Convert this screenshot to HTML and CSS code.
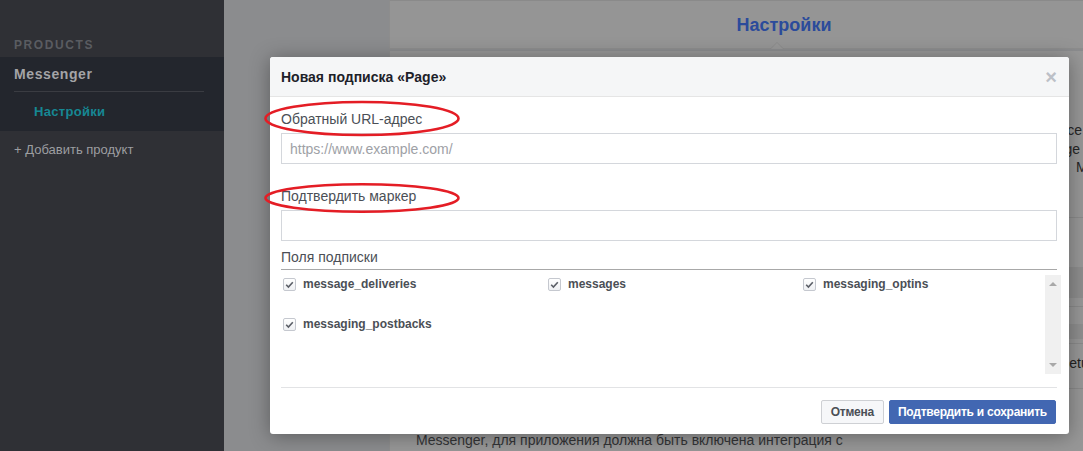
FILE: index.html
```html
<!DOCTYPE html>
<html lang="ru">
<head>
<meta charset="utf-8">
<title>Новая подписка</title>
<link rel="stylesheet" href="styles.css">
</head>
<body>
<div class="page">
  <aside class="sidebar">
    <div class="side-title">PRODUCTS</div>
    <div class="side-group">
      <div class="side-product">Messenger</div>
      <div class="side-sub">Настройки</div>
    </div>
    <div class="side-add">+ Добавить продукт</div>
  </aside>
  <div class="gutter"></div>
  <main class="main">
    <div class="tab-head">
      <h1 class="tab-title">Настройки</h1>
      <span class="notch"></span>
    </div>
    <div class="content">
      <div class="intro">
        <span class="intro-line l1">Укажите URL-адрес обратного вызова, который будет получать уведомления от сервисе</span>
        <span class="intro-line l2">Подпишитесь на события страницы, чтобы получать обновления страницы и page</span>
        <span class="intro-line l3">Messenger</span>
      </div>
      <div class="b1"></div>
      <div class="band"></div>
      <div class="b2"></div>
      <div class="b2b"></div>
      <div class="band2"></div>
      <div class="b2c"></div>
      <div class="b3"><span class="setup">Setup Webhooks</span></div>
      <div class="b4"></div>
      <p class="bottom-text">Messenger, для приложения должна быть включена интеграция с</p>
    </div>
  </main>
</div>

<div class="modal">
  <div class="modal-head">
    <span class="modal-title">Новая подписка «Page»</span>
    <span class="modal-close">×</span>
  </div>
  <div class="modal-body">
    <label class="field-label first">Обратный URL-адрес</label>
    <div class="input"><span class="placeholder">https://www.example.com/</span></div>
    <label class="field-label">Подтвердить маркер</label>
    <div class="input"></div>
    <div class="fields-label">Поля подписки</div>
    <div class="fields-box">
      <div class="fields-grid">
        <div class="check"><span class="box"><svg width="13" height="13" viewBox="0 0 13 13"><path d="M3.2 6.8 L5.4 9 L9.8 4.2" fill="none" stroke="#5b5f67" stroke-width="1.6"/></svg></span>message_deliveries</div>
        <div class="check"><span class="box"><svg width="13" height="13" viewBox="0 0 13 13"><path d="M3.2 6.8 L5.4 9 L9.8 4.2" fill="none" stroke="#5b5f67" stroke-width="1.6"/></svg></span>messages</div>
        <div class="check"><span class="box"><svg width="13" height="13" viewBox="0 0 13 13"><path d="M3.2 6.8 L5.4 9 L9.8 4.2" fill="none" stroke="#5b5f67" stroke-width="1.6"/></svg></span>messaging_optins</div>
        <div class="check"><span class="box"><svg width="13" height="13" viewBox="0 0 13 13"><path d="M3.2 6.8 L5.4 9 L9.8 4.2" fill="none" stroke="#5b5f67" stroke-width="1.6"/></svg></span>messaging_postbacks</div>
      </div>
      <div class="scrollbar">
        <span class="arrow up"></span>
        <span class="arrow down"></span>
      </div>
    </div>
    <div class="modal-foot">
      <button class="btn cancel">Отмена</button>
      <button class="btn primary">Подтвердить и сохранить</button>
    </div>
  </div>
</div>

<svg class="mark mark1" width="200" height="38" viewBox="0 0 200 38"><ellipse cx="99" cy="18.5" rx="96.5" ry="16.5" fill="none" stroke="#e41d25" stroke-width="2.6"/></svg>
<svg class="mark mark2" width="200" height="32" viewBox="0 0 200 32"><ellipse cx="99" cy="16" rx="96.5" ry="13.7" fill="none" stroke="#e41d25" stroke-width="2.6"/></svg>
</body>
</html>
```
FILE: styles.css
```css
html, body {
  margin: 0;
  padding: 0;
}
body {
  width: 1083px;
  height: 451px;
  overflow: hidden;
  position: relative;
  background: #8b8c8e;
  font-family: "Liberation Sans", Arial, Helvetica, sans-serif;
}
.page {
  display: flex;
  height: 451px;
}

/* Sidebar */
.sidebar {
  width: 224px;
  flex: none;
  background: #2f3035;
  padding-top: 38px;
  box-sizing: border-box;
}
.side-title {
  padding-left: 14px;
  font-size: 12px;
  line-height: 14px;
  font-weight: bold;
  letter-spacing: 1.6px;
  color: #5a5c61;
}
.side-group {
  margin-top: 5px;
  height: 74px;
  background: #23262d;
}
.side-product {
  margin: 0 20px 0 14px;
  height: 34px;
  line-height: 34px;
  font-size: 14px;
  font-weight: bold;
  letter-spacing: 0.6px;
  color: #a3a4a7;
  border-bottom: 1px solid #3a3c42;
}
.side-sub {
  padding-left: 34px;
  line-height: 39px;
  font-size: 13px;
  font-weight: bold;
  letter-spacing: 0.3px;
  color: #168894;
}
.side-add {
  padding: 1px 0 0 14px;
  line-height: 36px;
  font-size: 13px;
  color: #9d9ea1;
}

.gutter {
  width: 165px;
  flex: none;
}

/* Main */
.main {
  width: 790px;
  flex: none;
}
.tab-head {
  position: relative;
  height: 47px;
  background: #959595;
  border: 1px solid #8d8d8d;
  border-top-color: #8a8a8a;
  text-align: center;
}
.tab-title {
  margin: 0;
  font-size: 18px;
  line-height: 48px;
  font-weight: bold;
  color: #2b4b9b;
}
.notch {
  position: absolute;
  left: 380px;
  bottom: -1px;
  width: 0;
  height: 0;
  border-left: 7px solid transparent;
  border-right: 7px solid transparent;
  border-bottom: 7px solid #8a8a8a;
}
.notch::after {
  content: "";
  position: absolute;
  left: -6px;
  top: 1px;
  border-left: 6px solid transparent;
  border-right: 6px solid transparent;
  border-bottom: 6px solid #979797;
}
.content {
  margin-top: 2px;
  background: #979797;
  border-left: 1px solid #8d8d8d;
  height: 420px;
}
.intro {
  padding-top: 70px;
  height: 96px;
  border-bottom: 1px solid #8a8a8a;
}
.intro-line {
  display: block;
  white-space: nowrap;
  font-size: 14px;
  line-height: 18.5px;
  color: #262626;
  text-align: right;
  overflow: hidden;
}
.intro-line.l1 { width: 692px; }
.intro-line.l2 { width: 690px; }
.intro-line.l3 { text-align: left; padding-left: 686px; }
.b1 { height: 49px; }
.band { height: 31px; background: #8d8d8d; }
.b2 { height: 8px; border-bottom: 1px solid #8a8a8a; }
.b2b { height: 17px; }
.band2 { height: 15px; background: #8e8e8e; }
.b2c { height: 4px; border-bottom: 1px solid #8a8a8a; }
.b3 {
  height: 44px;
  font-size: 14px;
  line-height: 38px;
  color: #222;
  padding-left: 670px;
  white-space: nowrap;
  border-bottom: 1px solid #8a8a8a;
}
.b4 { height: 42px; }
.bottom-text {
  margin: 0;
  padding-left: 26px;
  font-size: 14px;
  line-height: 18px;
  color: #333436;
}

/* Modal */
.modal {
  position: absolute;
  left: 270px;
  top: 57px;
  width: 799px;
  height: 377px;
  background: #fff;
  border-radius: 3px;
  box-shadow: 0 2px 20px rgba(0, 0, 0, 0.35);
  overflow: hidden;
}
.modal-head {
  height: 39px;
  background: #f5f6f7;
  border-bottom: 1px solid #e5e5e5;
  display: flex;
  align-items: center;
  justify-content: space-between;
  padding: 0 12px 0 11px;
}
.modal-title {
  font-size: 14px;
  font-weight: bold;
  color: #1d2129;
}
.modal-close {
  font-size: 20px;
  font-weight: bold;
  color: #bcc0c7;
  line-height: 20px;
}
.modal-body {
  padding: 0 12px 0 11px;
}
.field-label {
  display: block;
  margin-top: 23px;
  margin-bottom: 5px;
  font-size: 14px;
  line-height: 18px;
  color: #4b4f56;
}
.field-label.first { margin-top: 13px; }
.input {
  height: 29px;
  border: 1px solid #d4d7dc;
  padding-left: 8px;
  display: flex;
  align-items: center;
}
.placeholder {
  font-size: 14px;
  color: #9ea1a6;
}
.fields-label {
  margin-top: 7px;
  padding-bottom: 3px;
  font-size: 14px;
  line-height: 18px;
  color: #4b4f56;
  border-bottom: 1px solid #a8a8a8;
}
.fields-box {
  display: flex;
  margin-top: 5px;
  margin-right: -4px;
  height: 99px;
}
.fields-grid {
  flex: 1;
  display: grid;
  grid-template-columns: 265px 255px 1fr;
  grid-auto-rows: 18px;
  row-gap: 22px;
  align-content: start;
}
.check {
  display: flex;
  align-items: center;
  padding-left: 2px;
  font-size: 12px;
  font-weight: bold;
  color: #4b4f56;
  white-space: nowrap;
}
.box {
  width: 13px;
  height: 13px;
  margin-right: 7px;
  border: 1px solid #c5c8cf;
  border-radius: 2px;
  background: linear-gradient(#ffffff, #eef0f3);
  box-sizing: border-box;
  display: flex;
  align-items: center;
  justify-content: center;
  flex: none;
}
.box svg { display: block; margin: -1px; }
.scrollbar {
  width: 16px;
  flex: none;
  background: #f0f0f0;
  position: relative;
}
.arrow {
  position: absolute;
  left: 4px;
  width: 0;
  height: 0;
  border-left: 4px solid transparent;
  border-right: 4px solid transparent;
}
.arrow.up { top: 7px; border-bottom: 4px solid #a8a8a8; }
.arrow.down { bottom: 7px; border-top: 4px solid #a8a8a8; }
.modal-foot {
  margin-top: 13px;
  border-top: 1px solid #e2e3e5;
  padding-top: 12px;
  display: flex;
  justify-content: flex-end;
  gap: 5px;
  padding-right: 1px;
}
.btn {
  height: 24px;
  padding: 0 8px;
  border: 1px solid #ced0d4;
  border-radius: 2px;
  background: #f6f7f9;
  font-family: "Liberation Sans", Arial, sans-serif;
  font-size: 12px;
  font-weight: bold;
  letter-spacing: -0.25px;
  color: #4b4f56;
  line-height: 22px;
  white-space: nowrap;
}
.btn.cancel { padding: 0 9px; }
.btn.primary {
  background: #4267b2;
  border-color: #4267b2;
  color: #fff;
}

/* Annotation marks */
.mark {
  position: absolute;
  left: 263px;
}
.mark1 { top: 100px; }
.mark2 { top: 182px; }
```
